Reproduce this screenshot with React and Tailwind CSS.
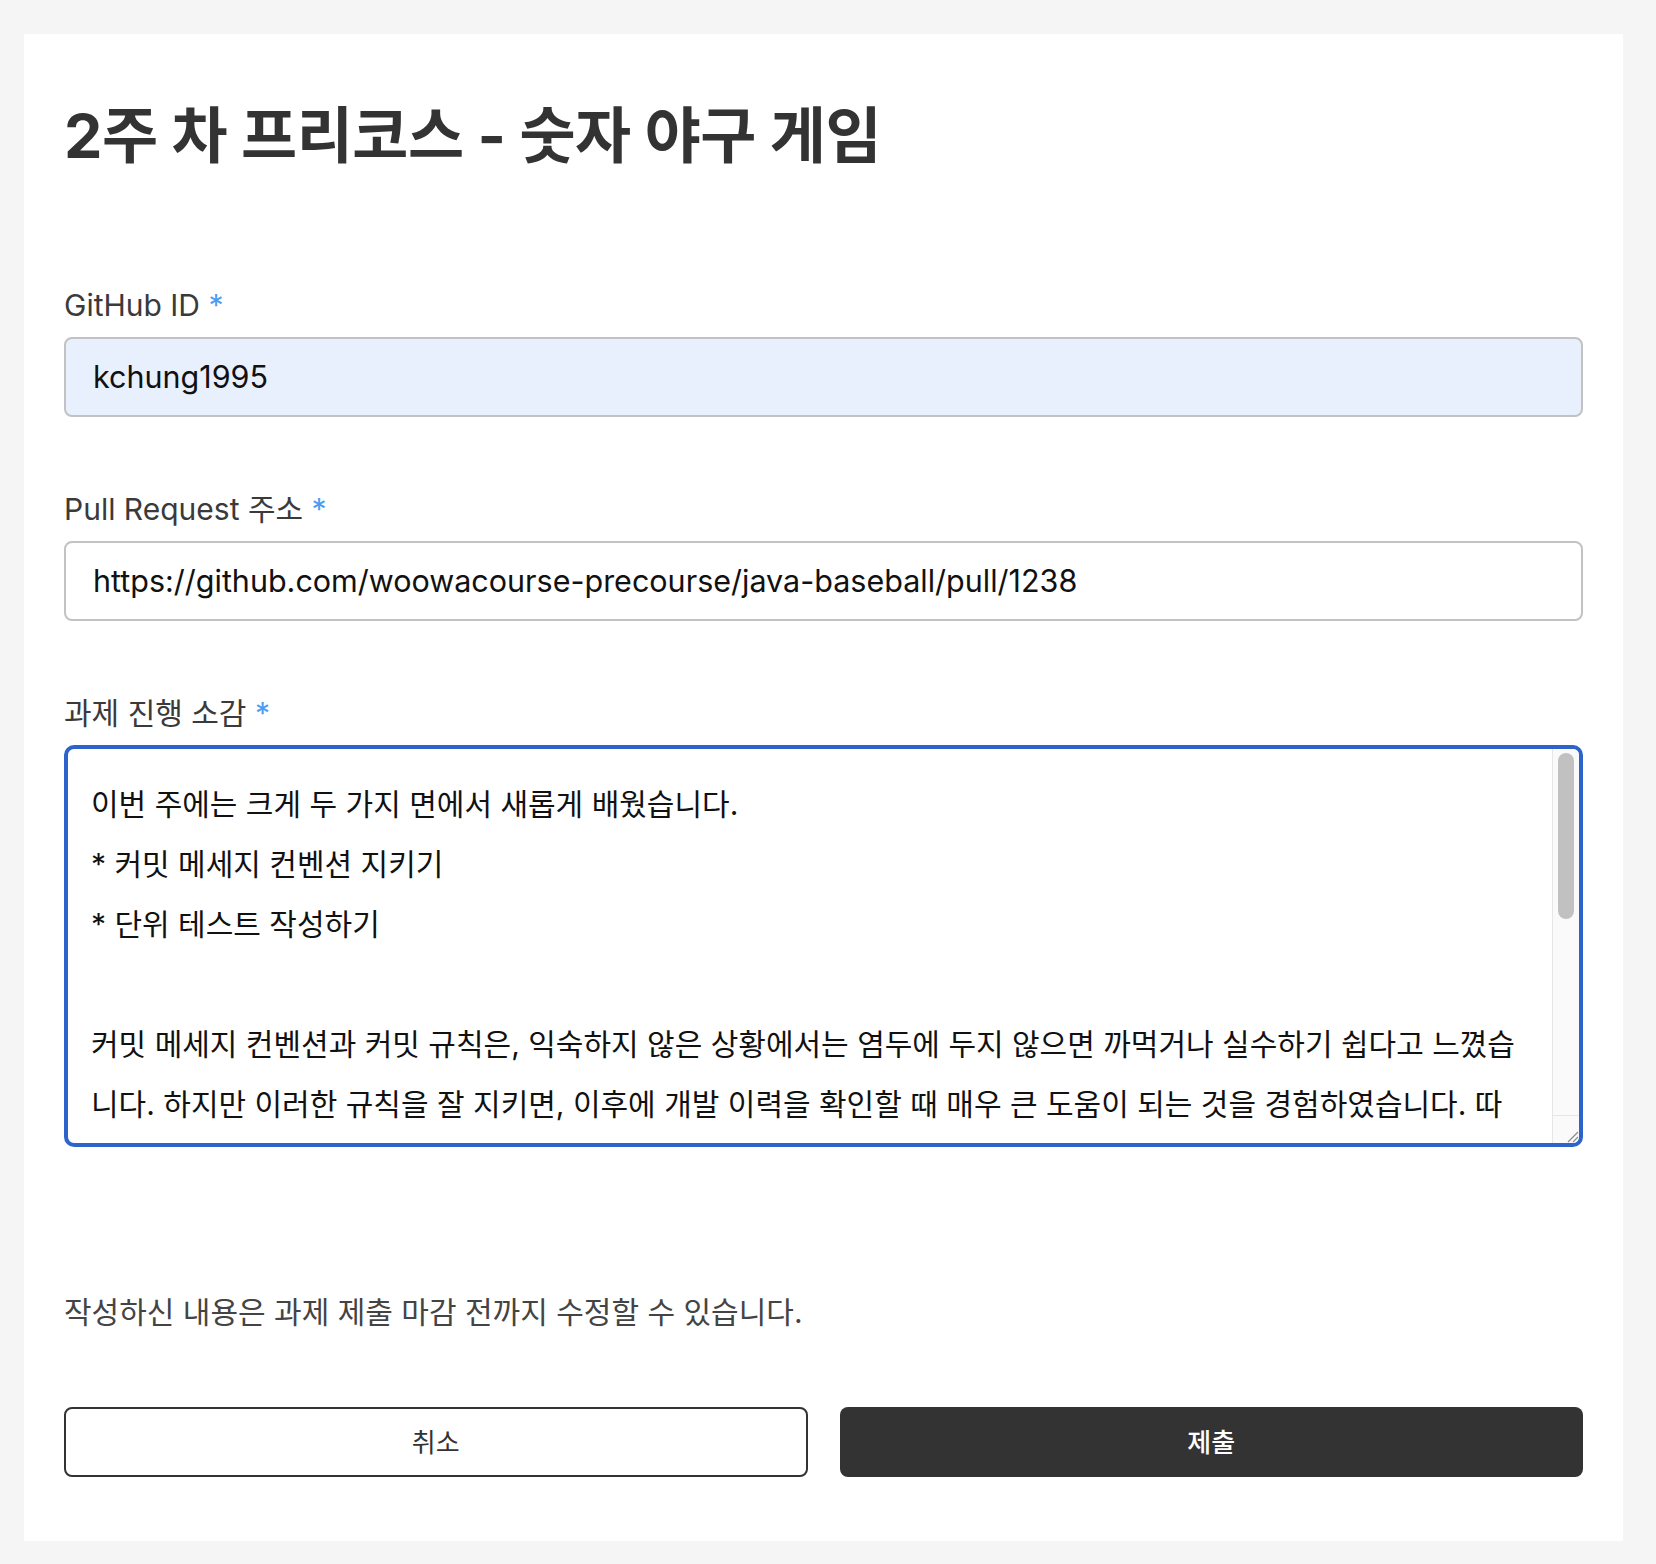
const font = { fontFamily: '"Inter", "Noto Sans CJK KR", sans-serif' }

const essayLines = [
  '이번 주에는 크게 두 가지 면에서 새롭게 배웠습니다.',
  '* 커밋 메세지 컨벤션 지키기',
  '* 단위 테스트 작성하기',
  '',
  '커밋 메세지 컨벤션과 커밋 규칙은, 익숙하지 않은 상황에서는 염두에 두지 않으면 까먹거나 실수하기 쉽다고 느꼈습',
  '니다. 하지만 이러한 규칙을 잘 지키면, 이후에 개발 이력을 확인할 때 매우 큰 도움이 되는 것을 경험하였습니다. 따',
]

const Label = ({ children }) => (
  <label className="block text-[30px] leading-[40px] text-[#3a3a3a] mb-3">
    {children} <span className="text-[#4a9bf5]">*</span>
  </label>
)

export default function App() {
  return (
    <div className="min-h-screen bg-[#f5f5f5] pt-[34px] pb-[22px] pl-[24px] pr-[33px]" style={font}>
      <div className="bg-white px-10 pt-[66px] pb-[64px]">
        {/* Title */}
        <h1 className="text-[61px] leading-[72px] font-bold text-[#333333] tracking-[-0.5px]">
          2주 차 프리코스 - 숫자 야구 게임
        </h1>

        {/* GitHub ID */}
        <div className="mt-[113px]">
          <Label>GitHub ID</Label>
          <div className="h-[80px] rounded-[8px] border-2 border-[#c2c2c2] bg-[#e8f0fe] flex items-center px-[27px] text-[30.5px] text-[#111111]">
            kchung1995
          </div>
        </div>

        {/* Pull request */}
        <div className="mt-[72px]">
          <Label>Pull Request 주소</Label>
          <div className="h-[80px] rounded-[8px] border-2 border-[#c2c2c2] bg-white flex items-center px-[27px] text-[30.5px] text-[#111111]">
            https://github.com/woowacourse-precourse/java-baseball/pull/1238
          </div>
        </div>

        {/* Essay */}
        <div className="mt-[72px]">
          <Label>과제 진행 소감</Label>
          <div className="h-[402px] rounded-[10px] border-4 border-[#2f63cc] bg-white flex overflow-hidden">
            <div className="flex-1 overflow-hidden pl-[23px] pt-[25px] text-[30px] leading-[60px] text-[#111111]">
              {essayLines.map((line, i) => (
                <div key={i} className="whitespace-nowrap h-[60px]">{line}</div>
              ))}
            </div>
            {/* scrollbar */}
            <div className="w-[27px] flex flex-col border-l border-[#e6e6e6] bg-[#fafafa]">
              <div className="flex-1 pt-[4px] flex justify-center">
                <div className="w-[16px] h-[166px] rounded-full bg-[#c1c1c1]" />
              </div>
              <div className="h-[28px] border-t border-[#e6e6e6] flex items-end justify-end">
                <svg width="14" height="14" viewBox="0 0 14 14">
                  <path d="M13 3 L3 13 M13 8 L8 13" stroke="#8a8a8a" strokeWidth="1.2" />
                </svg>
              </div>
            </div>
          </div>
        </div>

        {/* Helper text */}
        <p className="mt-[145px] text-[30px] leading-[40px] text-[#444444]">
          작성하신 내용은 과제 제출 마감 전까지 수정할 수 있습니다.
        </p>

        {/* Buttons */}
        <div className="mt-[75px] grid grid-cols-2 gap-[32px]">
          <button className="h-[70px] rounded-[8px] border-2 border-[#333333] bg-white text-[26px] text-[#333333]">
            취소
          </button>
          <button className="h-[70px] rounded-[8px] bg-[#333333] text-[26px] text-white font-medium">
            제출
          </button>
        </div>
      </div>
    </div>
  )
}
